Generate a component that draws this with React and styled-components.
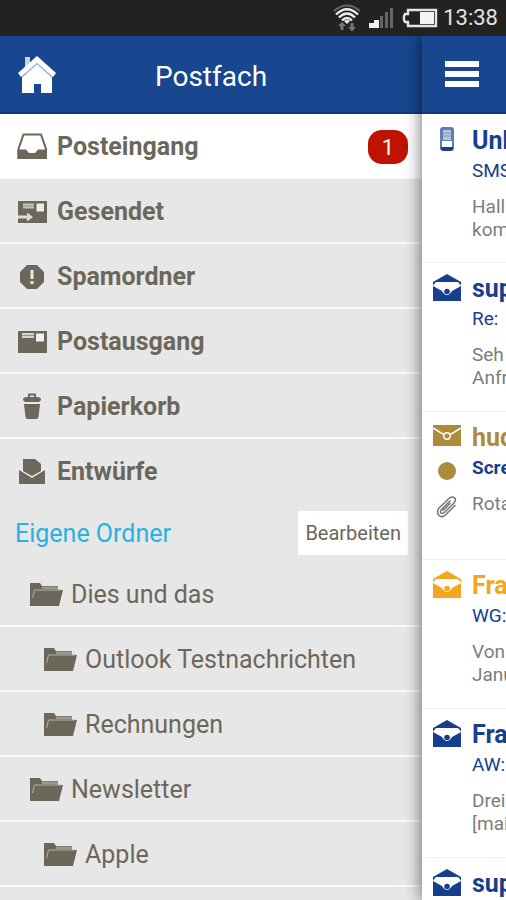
import React from "react";
import styled, { createGlobalStyle, css } from "styled-components";

const color = {
  bar: "#18468f",
  barEdge: "#113978",
  panel: "#e7e7e7",
  ink: "#6b675b",
  navy: "#16408f",
  gold: "#ad8b3c",
  orange: "#f5a61c",
  grey: "#7d7d7d",
};

const GlobalStyle = createGlobalStyle`
  *, *::before, *::after { box-sizing: border-box; }
  body { margin: 0; background: #fff; font-family: Roboto, "Noto Sans", sans-serif; }
  button { font: inherit; border: 0; cursor: pointer; }
  h1, h2, h3, p, ul { margin: 0; padding: 0; }
  ul { list-style: none; }
  svg { display: block; }
`;

const Screen = styled.div`
  display: flex;
  flex-direction: column;
  height: 100vh;
  overflow: hidden;
`;

const StatusBar = styled.div`
  position: relative;
  z-index: 2;
  flex: none;
  display: flex;
  justify-content: flex-end;
  align-items: center;
  height: 36px;
  padding-right: 8px;
  background: #222;
  color: #e4e4e4;
  font-size: 22px;
  line-height: 36px;
`;

const Body = styled.div`
  flex: 1;
  min-height: 0;
  display: flex;
`;

const Drawer = styled.nav`
  flex: 1;
  min-width: 0;
  background: ${color.panel};
`;

const MailPane = styled.main`
  position: relative;
  z-index: 1;
  flex: 0 0 84px;
  overflow: hidden;
  background: #fff;
  box-shadow: 0 0 16px rgba(0, 0, 0, 0.6);
`;

const bar = css`
  height: 78px;
  background: ${color.bar};
  border-bottom: 2px solid ${color.barEdge};
`;

const DrawerHeader = styled.header`
  ${bar}
  display: grid;
  grid-template-columns: 1fr auto 1fr;
  align-items: center;
  padding: 0 16px;
`;

const MailHeader = styled.header`
  ${bar}
  display: flex;
  align-items: center;
  padding-left: 23px;
`;

const Title = styled.h1`
  color: #fff;
  font-size: 28px;
  font-weight: 400;
  line-height: 36px;
  padding-top: 6px;
`;

const IconButton = styled.button`
  justify-self: start;
  padding: 0;
  background: none;
`;

const Row = styled.button`
  display: flex;
  align-items: center;
  width: 100%;
  height: 65px;
  padding: 2px 14px 0 ${(p) => 16 + (p.$level || 0) * 14}px;
  border-bottom: 2px solid #fafafa;
  background: ${(p) => (p.$active ? "#fff" : "transparent")};
  color: ${color.ink};
  font-size: 25px;
  font-weight: ${(p) => (p.$level ? 400 : 700)};
  text-align: left;
`;

const MainRow = styled(Row)`
  border-bottom-color: ${(p) => (p.$last ? "transparent" : "#fafafa")};
`;

const RowIcon = styled.span`
  flex: none;
  width: 41px;
`;

const Label = styled.span`
  flex: 1;
  white-space: nowrap;
`;

const Badge = styled.span`
  width: 40px;
  height: 34px;
  border-radius: 14px;
  background: #c01200;
  color: #fff;
  font-size: 22px;
  font-weight: 400;
  line-height: 36px;
  text-align: center;
`;

const SectionHead = styled.div`
  display: flex;
  align-items: center;
  justify-content: space-between;
  height: 58px;
  padding: 0 14px 0 15px;
`;

const SectionTitle = styled.h2`
  color: #29b1e3;
  font-size: 25px;
  font-weight: 400;
`;

const EditButton = styled.button`
  height: 44px;
  padding: 0 7px;
  background: #fff;
  color: ${color.ink};
  font-size: 20px;
`;

const Mail = styled.li`
  display: grid;
  grid-template-columns: 50px 1fr;
  height: ${(p) => (p.$compact ? 148 : 149)}px;
  padding-top: 10px;
  border-top: 1px solid #efefef;

  &:first-child {
    height: 148px;
    padding-top: 11px;
    border-top: 0;
  }
`;

const Marks = styled.div`
  display: flex;
  flex-direction: column;
  align-items: center;
`;

const MailText = styled.div`
  white-space: nowrap;
`;

const Sender = styled.h3`
  color: ${(p) => color[p.$tone]};
  font-size: 25px;
  font-weight: 700;
  line-height: 32px;
`;

const Subject = styled.p`
  color: ${color.navy};
  font-size: 19px;
  font-weight: ${(p) => (p.$unread ? 700 : 400)};
  line-height: 28px;
`;

const Preview = styled.p`
  margin-top: 10px;
  color: ${color.grey};
  font-size: 19px;
  line-height: 23px;
  white-space: pre-line;
`;

const WifiIcon = () => (
  <svg width="28" height="28" viewBox="0 0 28 28" fill="none" aria-hidden="true">
    <path d="M1 7Q14-4 27 7" stroke="#666" strokeWidth="2" />
    <path d="M3 10.500Q14 0 25 10.500M6 13.500Q14 5.500 22 13.500M9 16.500Q14 11.500 19 16.500" stroke="#eee" strokeWidth="2.400" />
    <path d="M11 17Q14 14.500 17 17L14 20Z" fill="#eee" />
    <path d="M9 26V20M19 19V25" stroke="#777" strokeWidth="3" />
    <path d="M5 22L9 18L13 22ZM15 23L19 27.500L23 23Z" fill="#777" />
  </svg>
);

const SignalIcon = () => (
  <svg width="25" height="20" viewBox="0 0 25 20" aria-hidden="true">
    <path d="M0 15h5v5H0zM5 12h5v8H5z" fill="#eee" />
    <path d="M11 8h3v12h-3zM16 4h3v16h-3zM21 0h3v20h-3z" fill="#666" />
  </svg>
);

const BatteryIcon = () => (
  <svg width="36" height="20" viewBox="0 0 36 20" aria-hidden="true">
    <path d="M6 2H34V18H6V14H3L2 12V8L3 6H6Z" fill="none" stroke="#e4e4e4" strokeWidth="2.400" />
    <path d="M18 4h14v12H18z" fill="#f4f4f4" />
  </svg>
);

const StatusIcons = styled.div`
  display: flex;
  align-items: center;
  gap: 8px;
  margin-right: 5px;
`;

const HomeIcon = () => (
  <svg width="42" height="42" viewBox="0 0 42 42" aria-hidden="true">
    <path d="M9 4h5v6l-5 5z" fill="#c4d1e6" />
    <path d="M21 9L36 23V40H25V31H18V40H6V23Z" fill="#fff" />
    <path d="M21 3L2 20L5 24L21 10L37 24L40 20Z" fill="#fff" />
    <path d="M6 24L21 10.500L36 24" fill="none" stroke="#93abd1" strokeWidth="1.200" />
  </svg>
);

const MenuIcon = () => (
  <svg width="34" height="28" viewBox="0 0 34 28" aria-hidden="true">
    <path d="M0 1h34v6H0zM0 11h34v6H0zM0 21h34v6H0z" fill="#fff" />
  </svg>
);

const drawings = {
  inbox: (
    <>
      <path d="M7.500 3.500H25L30 18V27H2.500V18Z" fill="none" stroke="currentColor" strokeWidth="2" />
      <path d="M1.500 18.500H10L13 22H19L22 18.500H31V28H1.500Z" fill="currentColor" />
    </>
  ),
  sent: (
    <>
      <path d="M2 5H31V27H2Z" fill="currentColor" />
      <path d="M7 7.500H18V12.500H7Z" fill="#c5c3bb" />
      <path d="M20.500 7.500H28V15.500H20.500Z" fill="#ecece8" />
      <path d="M7 10H18" stroke="#96938a" />
      <path d="M2 19.500H11V16.500L17 21L11 25.500V22.500H2Z" fill="#dddcd8" />
    </>
  ),
  spam: (
    <>
      <path d="M11 4H21L28 11V21L21 28H11L4 21V11Z" fill="currentColor" />
      <path d="M14.500 9H17.500V18H14.500ZM14.500 20H17.500V23H14.500Z" fill="#e7e7e7" />
    </>
  ),
  outbox: (
    <>
      <path d="M2 5H31V27H2Z" fill="currentColor" />
      <path d="M6 7H18V12H6Z" fill="#d5d3cc" />
      <path d="M20 7.500H28V15.500H20Z" fill="#f2f2ee" />
      <path d="M6 9.500H18" stroke="#96938a" />
    </>
  ),
  trash: (
    <>
      <path d="M13 6V3.500H19V6" fill="none" stroke="currentColor" strokeWidth="2" />
      <path d="M7 9Q7 6 11 6H21Q25 6 25 9L23 11H9Z" fill="currentColor" />
      <path d="M8 13H24L22.500 26Q22.500 28 20 28H12Q9.500 28 9.500 26Z" fill="currentColor" />
    </>
  ),
  drafts: (
    <>
      <path d="M7 3H19L25 8V15L16 20L7 15Z" fill="currentColor" />
      <path d="M3 14L16 22L29 14V28H3Z" fill="currentColor" />
    </>
  ),
};

const FolderGlyph = ({ name }) => (
  <svg width="32" height="32" viewBox="0 0 32 32" aria-hidden="true">
    {drawings[name]}
  </svg>
);

const OpenFolder = () => (
  <svg width="34" height="26" viewBox="0 0 34 26" aria-hidden="true">
    <path d="M0 1H10L12 4H28V8H33L29 24H0Z" fill="#6b675b" />
    <path d="M12 4.500H28V7H12Z" fill="#9b988e" />
    <path d="M2.500 16L4.500 8H31" fill="none" stroke="#b5b2a9" />
  </svg>
);

const MailMark = styled.svg.attrs({ width: 30, height: 30, viewBox: "0 0 30 30", "aria-hidden": true })`
  color: ${(p) => color[p.$tone]};
`;

const OpenMail = ({ tone }) => (
  <MailMark $tone={tone}>
    <path d="M1 9L15 1L29 9V12.500L26 9H4L1 12.500Z" fill="currentColor" />
    <path d="M1 13L10 18Q15 26 20 18L29 13V28H1Z" fill="currentColor" />
    <circle cx="15" cy="18.500" r="2.800" fill="currentColor" />
  </MailMark>
);

const ClosedMark = styled.div`
  display: flex;
  flex-direction: column;
  align-items: center;
  gap: 16px;
  padding-top: 3px;
  color: ${color.gold};
`;

const ClosedMail = () => (
  <ClosedMark>
    <svg width="30" height="21" viewBox="0 0 30 21" aria-hidden="true">
      <path d="M1 0H29V21H1Z" fill="currentColor" />
      <path d="M1 3L11 9Q15 14 19 9L29 3" fill="none" stroke="#fff" strokeWidth="1.600" />
      <circle cx="15" cy="11" r="3.200" fill="currentColor" stroke="#fff" strokeWidth="1.400" />
    </svg>
    <svg width="18" height="18" viewBox="0 0 18 18" aria-hidden="true">
      <circle cx="9" cy="9" r="9" fill="currentColor" />
    </svg>
    <svg width="22" height="22" viewBox="0 0 22 22" fill="none" stroke="#77736b" strokeWidth="1.500" strokeLinecap="round" aria-hidden="true">
      <path d="M14 5L5 14Q3.500 17 6 17.500Q7.500 17.500 9 16L18 7Q21 3 18 1.500Q15.500 0 12.500 3L3 12Q0 16 3 19.500Q6 22 9.500 19L19 9.500M7 14.500L14 7.500" />
    </svg>
  </ClosedMark>
);

const PhoneMark = () => (
  <svg width="16" height="27" viewBox="0 0 16 27" aria-hidden="true">
    <path d="M4 2H12Q15 2 15 5V23Q15 26 12 26H4Q1 26 1 23V5Q1 2 4 2Z" fill="#5f7eb4" />
    <path d="M4 5H12V15H4Z" fill="#b5c5df" />
    <path d="M3 16H13V22H3Z" fill="#fff" />
    <path d="M4 8H12M4 11H12" stroke="#7d98c5" />
    <path d="M2 22H14V24Q13 26 11 26H5Q3 26 2 24Z" fill="#16408f" />
  </svg>
);

const mailboxes = [
  { icon: "inbox", label: "Posteingang", count: 1 },
  { icon: "sent", label: "Gesendet" },
  { icon: "spam", label: "Spamordner" },
  { icon: "outbox", label: "Postausgang" },
  { icon: "trash", label: "Papierkorb" },
  { icon: "drafts", label: "Entwürfe" },
];

const folders = [
  { label: "Dies und das", level: 1 },
  { label: "Outlook Testnachrichten", level: 2 },
  { label: "Rechnungen", level: 2 },
  { label: "Newsletter", level: 1 },
  { label: "Apple", level: 2 },
];

const mails = [
  { mark: "phone", sender: "Unb", subject: "SMS", preview: "Hall\nkom" },
  { sender: "sup", subject: "Re:", preview: "Seh\nAnfr" },
  { mark: "closed", tone: "gold", sender: "hud", subject: "Scre", preview: "Rota", unread: true },
  { tone: "orange", sender: "Fra", subject: "WG:", preview: "Von\nJanu" },
  { sender: "Fra", subject: "AW:", preview: "Drei\n[mai" },
  { sender: "sup" },
];

const MarkFor = ({ mail }) => {
  if (mail.mark === "phone") return <PhoneMark />;
  if (mail.mark === "closed") return <ClosedMail />;
  return <OpenMail tone={mail.tone || "navy"} />;
};

export default function App() {
  return (
    <Screen>
      <GlobalStyle />
      <StatusBar>
        <StatusIcons>
          <WifiIcon />
          <SignalIcon />
          <BatteryIcon />
        </StatusIcons>
        13:38
      </StatusBar>
      <Body>
        <Drawer>
          <DrawerHeader>
            <IconButton aria-label="Start">
              <HomeIcon />
            </IconButton>
            <Title>Postfach</Title>
          </DrawerHeader>
          <ul>
            {mailboxes.map((box, i) => (
              <li key={box.label}>
                <MainRow $active={i === 0} $last={i === mailboxes.length - 1}>
                  <RowIcon>
                    <FolderGlyph name={box.icon} />
                  </RowIcon>
                  <Label>{box.label}</Label>
                  {box.count && <Badge>{box.count}</Badge>}
                </MainRow>
              </li>
            ))}
          </ul>
          <SectionHead>
            <SectionTitle>Eigene Ordner</SectionTitle>
            <EditButton>Bearbeiten</EditButton>
          </SectionHead>
          <ul>
            {folders.map((folder) => (
              <li key={folder.label}>
                <Row $level={folder.level}>
                  <RowIcon>
                    <OpenFolder />
                  </RowIcon>
                  <Label>{folder.label}</Label>
                </Row>
              </li>
            ))}
          </ul>
        </Drawer>
        <MailPane>
          <MailHeader>
            <IconButton aria-label="Menü">
              <MenuIcon />
            </IconButton>
          </MailHeader>
          <ul>
            {mails.map((mail, i) => (
              <Mail key={i} $compact={mail.mark === "closed"}>
                <Marks>
                  <MarkFor mail={mail} />
                </Marks>
                <MailText>
                  <Sender $tone={mail.tone || "navy"}>{mail.sender}</Sender>
                  {mail.subject && <Subject $unread={mail.unread}>{mail.subject}</Subject>}
                  {mail.preview && <Preview>{mail.preview}</Preview>}
                </MailText>
              </Mail>
            ))}
          </ul>
        </MailPane>
      </Body>
    </Screen>
  );
}
